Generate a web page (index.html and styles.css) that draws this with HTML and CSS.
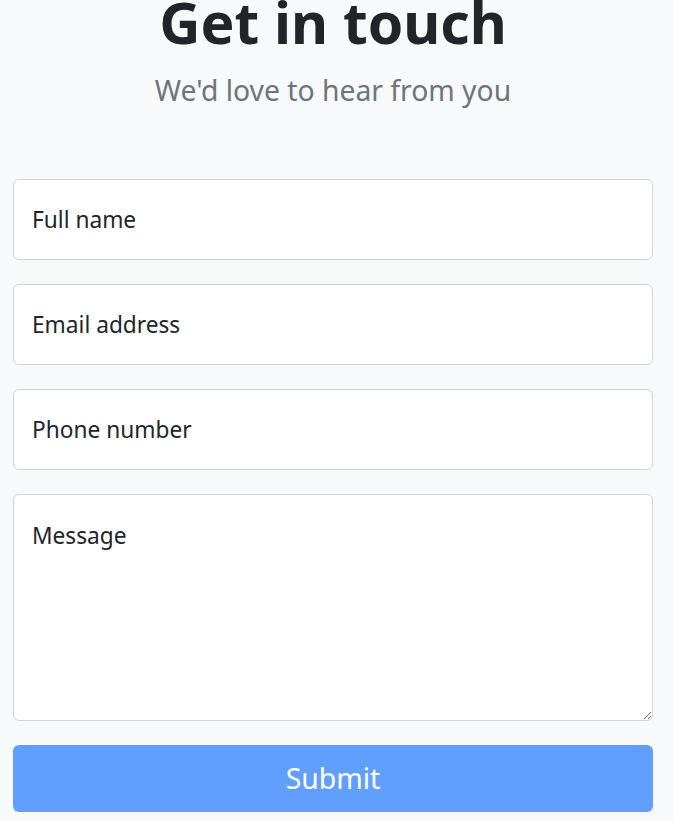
FILE: index.html
```html
<!DOCTYPE html>
<html>
<head>
<meta charset="utf-8">
<link rel="stylesheet" href="styles.css">
</head>
<body>
<main class="page">
  <header class="intro">
    <h1 class="title">Get in touch</h1>
    <p class="subtitle">We'd love to hear from you</p>
  </header>
  <form class="form">
    <input class="field" type="text" placeholder="Full name">
    <input class="field" type="email" placeholder="Email address">
    <input class="field" type="tel" placeholder="Phone number">
    <textarea class="field area" placeholder="Message"></textarea>
    <button class="submit" type="button">Submit</button>
  </form>
</main>
</body>
</html>
```
FILE: styles.css
```css
html, body {
  margin: 0;
  padding: 0;
  background: #f8f9fa;
}
body {
  font-family: "Noto Sans", "Open Sans", sans-serif;
  color: #212529;
}
.page {
  padding: 0 20px 0 13px;
}
.intro {
  text-align: center;
  margin-top: -12px;
}
.title {
  margin: 0;
  font-size: 57px;
  font-weight: 700;
  line-height: 1.2;
  color: #212529;
}
.subtitle {
  margin: 13px 0 0;
  font-size: 28.3px;
  color: #6c757d;
  line-height: 1.5;
}
.form {
  margin-top: 67px;
  display: flex;
  flex-direction: column;
  gap: 24px;
}
.field {
  box-sizing: border-box;
  width: 100%;
  height: 81px;
  padding: 0 18px;
  border: 1px solid #ced4da;
  border-radius: 6px;
  background: #fff;
  font-family: inherit;
  font-size: 22.7px;
  color: #212529;
  outline: none;
}
.field::placeholder {
  color: #212529;
  opacity: 1;
}
.area {
  height: 227px;
  padding: 25px 18px;
  resize: vertical;
  display: block;
}
.submit {
  height: 67px;
  border: none;
  border-radius: 6px;
  background: #609ffe;
  color: #fff;
  font-family: inherit;
  font-size: 28.4px;
  cursor: pointer;
}
```
